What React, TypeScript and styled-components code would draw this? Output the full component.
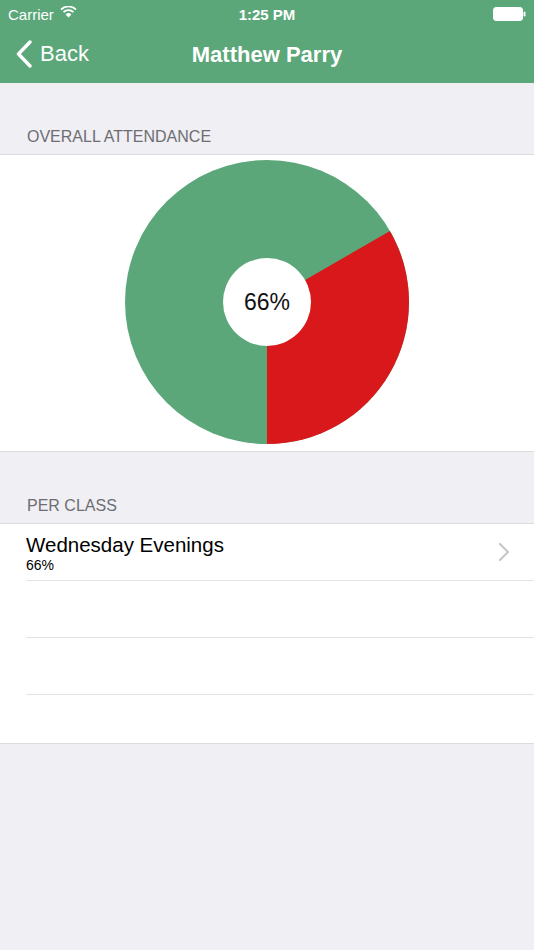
import styled, { createGlobalStyle } from "styled-components"

const GlobalStyle = createGlobalStyle`
  html, body {
    margin: 0;
    padding: 0;
    background: #efeff4;
    font-family: "Liberation Sans", Arial, sans-serif;
  }
  * { box-sizing: border-box; }
`

const green = "#5ba77a"
const red = "#d8181b"

function polar(cx: number, cy: number, r: number, deg: number) {
  const a = ((deg - 90) * Math.PI) / 180
  return [cx + r * Math.cos(a), cy + r * Math.sin(a)]
}

// attended = 2 of 3 sessions, shown rounded down as 66%
function Pie({ attended, total }: { attended: number; total: number }) {
  const r = 142
  const c = 142
  const missed = 360 * (1 - attended / total)
  const start = 180 - missed
  const [x1, y1] = polar(c, c, r, start)
  const [x2, y2] = polar(c, c, r, 180)
  return (
    <PieHolder>
      <svg width={284} height={284} viewBox="0 0 284 284">
        <circle cx={c} cy={c} r={r} fill={green} />
        <path
          d={`M ${c} ${c} L ${x1} ${y1} A ${r} ${r} 0 0 1 ${x2} ${y2} Z`}
          fill={red}
        />
        <circle cx={c} cy={c} r={44} fill="#fff" />
      </svg>
      <PieLabel>{Math.floor((attended / total) * 100)}%</PieLabel>
    </PieHolder>
  )
}

export default function App() {
  const classes = [{ name: "Wednesday Evenings", value: "66%" }]
  return (
    <Screen>
      <GlobalStyle />
      <TopBar>
        <StatusBar>
          <Carrier>
            Carrier
            <svg width="17" height="12" viewBox="0 0 17 12">
              <path d="M8.5 11.5 L5.6 8.4 A4.2 4.2 0 0 1 11.4 8.4 Z" fill="#fff" />
              <path d="M3.5 6.2 A7 7 0 0 1 13.5 6.2" stroke="#fff" strokeWidth="1.7" fill="none" />
              <path d="M1 3.6 A10.6 10.6 0 0 1 16 3.6" stroke="#fff" strokeWidth="1.7" fill="none" />
            </svg>
          </Carrier>
          <Clock>1:25 PM</Clock>
          <Battery>
            <svg width="33" height="14" viewBox="0 0 33 14">
              <rect x="0.5" y="0.5" width="29" height="13" rx="2.5" fill="#fff" stroke="#fff" />
              <rect x="30.5" y="4.5" width="2" height="5" rx="1" fill="#fff" />
            </svg>
          </Battery>
        </StatusBar>
        <NavBar>
          <BackButton>
            <svg width="18" height="28" viewBox="0 0 18 28">
              <path d="M15 2 L3.5 14 L15 26" stroke="#fff" strokeWidth="3.4" fill="none" strokeLinecap="round" strokeLinejoin="round" />
            </svg>
            Back
          </BackButton>
          <Title>Matthew Parry</Title>
        </NavBar>
      </TopBar>

      <SectionHeader>OVERALL ATTENDANCE</SectionHeader>
      <ChartSection>
        <Pie attended={2} total={3} />
      </ChartSection>

      <SectionHeader>PER CLASS</SectionHeader>
      <ListSection>
        {classes.map((c) => (
          <Row key={c.name}>
            <RowText>
              <RowTitle>{c.name}</RowTitle>
              <RowSub>{c.value}</RowSub>
            </RowText>
            <svg width="12" height="20" viewBox="0 0 12 20">
              <path d="M2 2 L10 10 L2 18" stroke="#c7c7cc" strokeWidth="2.2" fill="none" strokeLinecap="round" strokeLinejoin="round" />
            </svg>
          </Row>
        ))}
        <Row />
        <Row />
        <Row $last />
      </ListSection>
    </Screen>
  )
}

const Screen = styled.div`
  width: 534px;
  min-height: 950px;
  background: #efeff4;
`

const TopBar = styled.div`
  background: ${green};
  height: 83px;
  color: #fff;
`

const StatusBar = styled.div`
  height: 28px;
  display: grid;
  grid-template-columns: 1fr auto 1fr;
  align-items: center;
  padding: 0 8px;
  font-size: 15px;
`

const Carrier = styled.div`
  display: flex;
  align-items: center;
  gap: 6px;
  svg { margin-top: -4px; }
`

const Clock = styled.div`
  font-weight: bold;
`

const Battery = styled.div`
  display: flex;
  justify-content: flex-end;
`

const NavBar = styled.div`
  height: 55px;
  position: relative;
  display: flex;
  align-items: center;
  justify-content: center;
`

const BackButton = styled.div`
  position: absolute;
  left: 15px;
  top: 12px;
  display: flex;
  align-items: center;
  gap: 7px;
  font-size: 22px;
`

const Title = styled.div`
  font-size: 22px;
  font-weight: bold;
  margin-top: -2px;
`

const SectionHeader = styled.div`
  padding: 44px 27px 7px;
  font-size: 16px;
  color: #6d6d72;
  border-bottom: 1px solid #dcdce0;
  line-height: 20px;
`

const ChartSection = styled.div`
  background: #fff;
  height: 297px;
  display: flex;
  align-items: center;
  justify-content: center;
  border-bottom: 1px solid #dcdce0;
`

const PieHolder = styled.div`
  position: relative;
  width: 284px;
  height: 284px;
  margin-top: -2px;
  svg { display: block; }
`

const PieLabel = styled.div`
  position: absolute;
  inset: 0;
  display: flex;
  align-items: center;
  justify-content: center;
  font-size: 23px;
  color: #111;
`

const ListSection = styled.div`
  background: #fff;
  padding-left: 26px;
  border-bottom: 1px solid #dcdce0;
`

const Row = styled.div<{ $last?: boolean }>`
  height: 57px;
  display: flex;
  align-items: center;
  justify-content: space-between;
  padding-right: 24px;
  border-bottom: ${(p) => (p.$last ? "none" : "1px solid #e3e3e6")};
  ${(p) => p.$last && "height: 48px;"}
`

const RowText = styled.div`
  display: flex;
  flex-direction: column;
  margin-top: 2px;
`

const RowTitle = styled.div`
  font-size: 20.5px;
  color: #000;
  line-height: 24px;
`

const RowSub = styled.div`
  font-size: 14px;
  color: #000;
  line-height: 16px;
`
